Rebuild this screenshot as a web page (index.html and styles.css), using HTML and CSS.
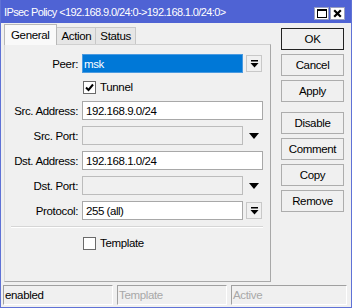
FILE: index.html
```html
<!DOCTYPE html>
<html>
<head>
<meta charset="utf-8">
<link rel="stylesheet" href="styles.css">
</head>
<body>
<div class="win">
  <div class="titlebar">
    <span class="title">IPsec Policy &lt;192.168.9.0/24:0-&gt;192.168.1.0/24:0&gt;</span>
    <div class="tbtns">
      <span class="tbtn"><svg width="10" height="9" viewBox="0 0 10 9"><rect x="0.5" y="0.5" width="9" height="8" fill="none" stroke="#000"/><rect x="0" y="0" width="10" height="2" fill="#000"/></svg></span>
      <span class="tbtn"><svg width="9" height="9" viewBox="0 0 9 9"><path d="M1.2 1.2 L7.8 7.8 M7.8 1.2 L1.2 7.8" stroke="#000" stroke-width="2.2"/></svg></span>
    </div>
  </div>
  <div class="main">
    <div class="left">
      <div class="tabs">
        <span class="tab active">General</span>
        <span class="tab">Action</span>
        <span class="tab">Status</span>
      </div>
      <div class="panel">
        <div class="row">
          <span class="lbl">Peer:</span>
          <span class="field sel">msk</span>
          <span class="ddbtn"><svg width="9" height="8" viewBox="0 0 9 8"><rect x="1" y="0" width="7" height="1.5" fill="#000"/><path d="M0.5 3 L8.5 3 L4.5 7.5 Z" fill="#000"/></svg></span>
        </div>
        <div class="row chk-row">
          <span class="lbl"></span>
          <span class="chk"><svg width="11" height="11" viewBox="0 0 11 11"><path d="M2 5.5 L4.5 8 L9 2.5" fill="none" stroke="#000" stroke-width="2"/></svg></span>
          <span class="chk-lbl">Tunnel</span>
        </div>
        <div class="row">
          <span class="lbl">Src. Address:</span>
          <span class="field wide">192.168.9.0/24</span>
        </div>
        <div class="row">
          <span class="lbl">Src. Port:</span>
          <span class="field dis"></span>
          <span class="arrow"><svg width="10" height="6" viewBox="0 0 10 6"><path d="M0 0 L10 0 L5 6 Z" fill="#000"/></svg></span>
        </div>
        <div class="row">
          <span class="lbl">Dst. Address:</span>
          <span class="field wide">192.168.1.0/24</span>
        </div>
        <div class="row">
          <span class="lbl">Dst. Port:</span>
          <span class="field dis"></span>
          <span class="arrow"><svg width="10" height="6" viewBox="0 0 10 6"><path d="M0 0 L10 0 L5 6 Z" fill="#000"/></svg></span>
        </div>
        <div class="row">
          <span class="lbl">Protocol:</span>
          <span class="field">255 (all)</span>
          <span class="ddbtn"><svg width="9" height="8" viewBox="0 0 9 8"><rect x="1" y="0" width="7" height="1.5" fill="#000"/><path d="M0.5 3 L8.5 3 L4.5 7.5 Z" fill="#000"/></svg></span>
        </div>
        <div class="sep"></div>
        <div class="row chk-row">
          <span class="lbl"></span>
          <span class="chk"></span>
          <span class="chk-lbl">Template</span>
        </div>
      </div>
    </div>
    <div class="buttons">
      <span class="btn default">OK</span>
      <span class="btn">Cancel</span>
      <span class="btn">Apply</span>
      <span class="btn gap">Disable</span>
      <span class="btn">Comment</span>
      <span class="btn">Copy</span>
      <span class="btn">Remove</span>
    </div>
  </div>
  <div class="status">
    <span class="sfield s1">enabled</span>
    <span class="sfield s2 grey">Template</span>
    <span class="sfield s3 grey">Active</span>
  </div>
</div>
</body>
</html>
```
FILE: styles.css
```css
* { box-sizing: border-box; }
html, body { margin: 0; padding: 0; }
body {
  width: 352px;
  height: 308px;
  overflow: hidden;
  font-family: "Liberation Sans", Arial, sans-serif;
  font-size: 11px;
  letter-spacing: -0.35px;
  color: #000;
  background: #f0f0f0;
}
.win {
  width: 352px;
  height: 308px;
  border-left: 1px solid #5f72d6;
  border-right: 1px solid #5f72d6;
  border-bottom: 1px solid #5f72d6;
  display: flex;
  flex-direction: column;
  background: #f0f0f0;
}
.titlebar {
  height: 23px;
  background: #4f63d4;
  display: flex;
  align-items: center;
  justify-content: space-between;
  padding: 0 6px 0 3px;
  flex: none;
}
.title {
  color: #fff;
  font-size: 11px;
  letter-spacing: -0.6px;
}
.tbtns { display: flex; gap: 1px; margin-top: 4px; }
.tbtn {
  width: 15px;
  height: 13px;
  background: #fff;
  border: 1px solid #9aa0c0;
  display: flex;
  align-items: center;
  justify-content: center;
}
.main {
  display: flex;
  flex: none;
  height: 259px;
}
.left {
  margin-left: 3px;
  width: 267px;
  display: flex;
  flex-direction: column;
}
.tabs {
  display: flex;
  height: 21px;
  align-items: flex-end;
  padding-left: 1px;
}
.tab {
  height: 17px;
  padding: 0 4px;
  border: 1px solid #c8c8c8;
  border-bottom: none;
  background: #e6e6e6;
  display: flex;
  align-items: center;
  font-size: 11.5px;
  margin-left: -1px;
}
.tab.active {
  background: #f9f9f9;
  padding: 0 7px 0 6px;
  border-color: #b8b8b8;
  position: relative;
  z-index: 1;
  margin-bottom: -1px;
  height: 21px;
}
.panel {
  flex: 1;
  border: 1px solid #a8a8a8;
  border-top-color: #d0d0d0;
  border-left-color: #d9d9d9;
  background: #f0f0f0;
  padding-top: 9px;
}
.row {
  display: flex;
  align-items: center;
  height: 19px;
  margin-bottom: 6px;
}
.chk-row { height: 16px; margin-bottom: 6px; }
.lbl {
  width: 73px;
  text-align: right;
  margin-right: 4px;
  font-size: 11.5px;
  flex: none;
}
.field {
  width: 161px;
  height: 19px;
  background: #fff;
  border: 1px solid #a8a8a8;
  padding-left: 3px;
  font-size: 11.5px;
  letter-spacing: -0.45px;
  display: flex;
  align-items: center;
  flex: none;
}
.field.wide { width: 181px; }
.field.dis { background: #f0f0f0; border-color: #bcbcbc; }
.field.sel {
  background: #0078d7;
  border-color: #4a9ae0;
  color: #fff;
  padding-left: 1px;
}
.ddbtn {
  width: 16px;
  height: 17px;
  margin-left: 3px;
  border: 1px solid #c8c8c8;
  background: #f0f0f0;
  display: flex;
  align-items: center;
  justify-content: center;
  flex: none;
}
.arrow {
  margin-left: 6px;
  display: flex;
  align-items: center;
}
.chk {
  width: 13px;
  height: 13px;
  background: #fff;
  border: 1px solid #333;
  display: flex;
  align-items: center;
  justify-content: center;
  margin-left: 1px;
  flex: none;
}
.chk-row .chk { border-color: #6a6a6a; }
.chk-lbl { margin-left: 4px; font-size: 11.5px; }
.sep {
  background: #d6d6d6;
  margin: 3px 7px 7px 6px;
  border-bottom: 1px solid #fff;
  height: 2px;
}
.buttons {
  margin-left: 10px;
  padding-top: 5px;
  display: flex;
  flex-direction: column;
  gap: 4px;
}
.btn {
  width: 63px;
  height: 22px;
  border: 1px solid #adadad;
  background: #f0f0f0;
  display: flex;
  align-items: center;
  justify-content: center;
  font-size: 11.5px;
}
.btn.default { border: 1px solid #222; }
.btn.gap { margin-top: 6px; }
.status {
  flex: 1;
  display: flex;
  gap: 4px;
  padding: 3px 4px 2px 2px;
}
.sfield {
  height: 20px;
  border-top: 1px solid #a0a0a0;
  border-left: 1px solid #a0a0a0;
  border-bottom: 1px solid #fff;
  border-right: 1px solid #fff;
  display: flex;
  align-items: center;
  padding-left: 1px;
  font-size: 11.5px;
}
.s1 { width: 110px; }
.s2 { width: 110px; }
.s3 { flex: 1; }
.grey { color: #a8a8a8; }
```
